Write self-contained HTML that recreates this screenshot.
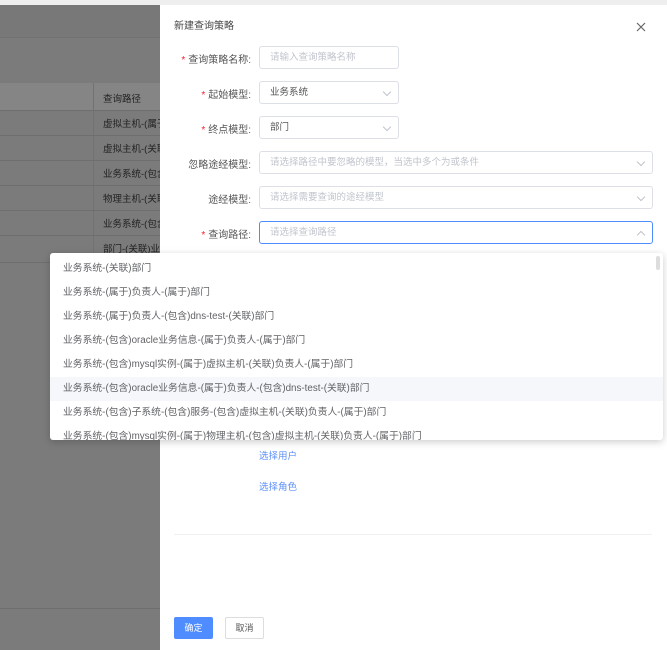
<!DOCTYPE html>
<html><head><meta charset="utf-8"><style>
*{box-sizing:border-box;margin:0;padding:0}
body{width:667px;height:650px;position:relative;overflow:hidden;font-family:"Liberation Sans","Noto Sans CJK SC",sans-serif;font-size:9px;color:#555;background:#7b7b7b}
.abs{position:absolute}
.bgline{position:absolute;left:0;width:160px;height:1px;background:#6e6e6e}
.bgtxt{position:absolute;left:103px;font-size:9.5px;color:#222}
.drawer{position:absolute;left:160px;top:5px;width:507px;height:645px;background:#fff}
.lbl{position:absolute;right:416px;font-size:10px;color:#555;text-align:right;white-space:nowrap}
.lbl b{color:#f5222d;font-weight:normal;margin-right:3px}
.inp{position:absolute;left:259px;height:23px;border:1px solid #dcdfe6;border-radius:3px;font-size:9.5px;color:#c0c4cc;padding:0 10px;line-height:21px;white-space:nowrap;overflow:hidden}
.arr{position:absolute;right:8px;top:7px;width:6px;height:6px;border-right:1px solid #c0c4cc;border-bottom:1px solid #c0c4cc;transform:rotate(45deg)}
.dd{position:absolute;left:50px;top:253px;width:613px;height:187px;background:#fff;box-shadow:0 2px 8px rgba(0,0,0,.2);border-radius:3px;overflow:hidden}
.it{height:24px;line-height:24px;padding-left:13px;font-size:9.8px;color:#606266;white-space:nowrap}
</style></head><body>
<div class="abs" style="left:0;top:0;width:667px;height:5px;background:#eee"></div>
<div class="abs" style="left:0;top:5px;width:160px;height:32px;background:#787878"></div>
<div class="bgline" style="top:37px;background:#727272"></div>
<div class="abs" style="left:0;top:83px;width:160px;height:27px;background:#858585"></div>
<div class="abs" style="left:93px;top:83px;width:1px;height:180px;background:#727272"></div>
<div class="bgline" style="top:110px"></div><div class="bgline" style="top:135px"></div><div class="bgline" style="top:160px"></div><div class="bgline" style="top:185px"></div><div class="bgline" style="top:210px"></div><div class="bgline" style="top:235px"></div><div class="bgline" style="top:262px"></div><div class="bgline" style="top:608px"></div>
<div class="bgtxt" style="top:91px">查询路径</div>
<div class="bgtxt" style="top:116px">虚拟主机-(属于</div>
<div class="bgtxt" style="top:141px">虚拟主机-(关联</div>
<div class="bgtxt" style="top:166px">业务系统-(包含</div>
<div class="bgtxt" style="top:191px">物理主机-(关联</div>
<div class="bgtxt" style="top:216px">业务系统-(包含</div>
<div class="bgtxt" style="top:241px">部门-(关联)业务</div>
<div class="drawer"></div>
<div class="abs" style="left:174px;top:17px;font-size:10px;color:#444">新建查询策略</div>
<svg class="abs" style="left:636px;top:22px" width="10" height="10"><path d="M1 1L9 9M9 1L1 9" stroke="#666" stroke-width="1.2"/></svg>
<div class="lbl" style="top:51px"><b>*</b>查询策略名称:</div>
<div class="inp" style="top:46px;width:140px">请输入查询策略名称</div>
<div class="lbl" style="top:86px"><b>*</b>起始模型:</div>
<div class="inp" style="top:81px;width:140px;color:#555">业务系统<i class="arr"></i></div>
<div class="lbl" style="top:121px"><b>*</b>终点模型:</div>
<div class="inp" style="top:116px;width:140px;color:#555">部门<i class="arr"></i></div>
<div class="lbl" style="top:156px">忽略途经模型:</div>
<div class="inp" style="top:151px;width:394px">请选择路径中要忽略的模型，当选中多个为或条件<i class="arr"></i></div>
<div class="lbl" style="top:191px">途经模型:</div>
<div class="inp" style="top:186px;width:394px">请选择需要查询的途经模型<i class="arr"></i></div>
<div class="lbl" style="top:226px"><b>*</b>查询路径:</div>
<div class="inp" style="top:221px;width:394px;border-color:#4e8cff">请选择查询路径<i class="arr" style="transform:rotate(225deg);top:10px"></i></div>
<div class="dd">
<div style="height:4px"></div>
<div class="it">业务系统-(关联)部门</div>
<div class="it">业务系统-(属于)负责人-(属于)部门</div>
<div class="it">业务系统-(属于)负责人-(包含)dns-test-(关联)部门</div>
<div class="it">业务系统-(包含)oracle业务信息-(属于)负责人-(属于)部门</div>
<div class="it">业务系统-(包含)mysql实例-(属于)虚拟主机-(关联)负责人-(属于)部门</div>
<div class="it" style="background:#f5f7fa">业务系统-(包含)oracle业务信息-(属于)负责人-(包含)dns-test-(关联)部门</div>
<div class="it">业务系统-(包含)子系统-(包含)服务-(包含)虚拟主机-(关联)负责人-(属于)部门</div>
<div class="it">业务系统-(包含)mysql实例-(属于)物理主机-(包含)虚拟主机-(关联)负责人-(属于)部门</div>
<div class="abs" style="right:3px;top:3px;width:4px;height:14px;background:#ddd;border-radius:2px"></div>
</div>
<div class="abs" style="left:259px;top:448px;color:#5b8ff9;font-size:9.5px">选择用户</div>
<div class="abs" style="left:259px;top:479px;color:#5b8ff9;font-size:9.5px">选择角色</div>
<div class="abs" style="left:174px;top:534px;width:478px;height:1px;background:#f0f0f0"></div>
<div class="abs" style="left:174px;top:617px;width:39px;height:22px;background:#4e8cff;border-radius:2px;color:#fff;text-align:center;line-height:22px">确定</div>
<div class="abs" style="left:225px;top:617px;width:39px;height:22px;border:1px solid #ddd;border-radius:2px;color:#555;text-align:center;line-height:20px">取消</div>
</body></html>
